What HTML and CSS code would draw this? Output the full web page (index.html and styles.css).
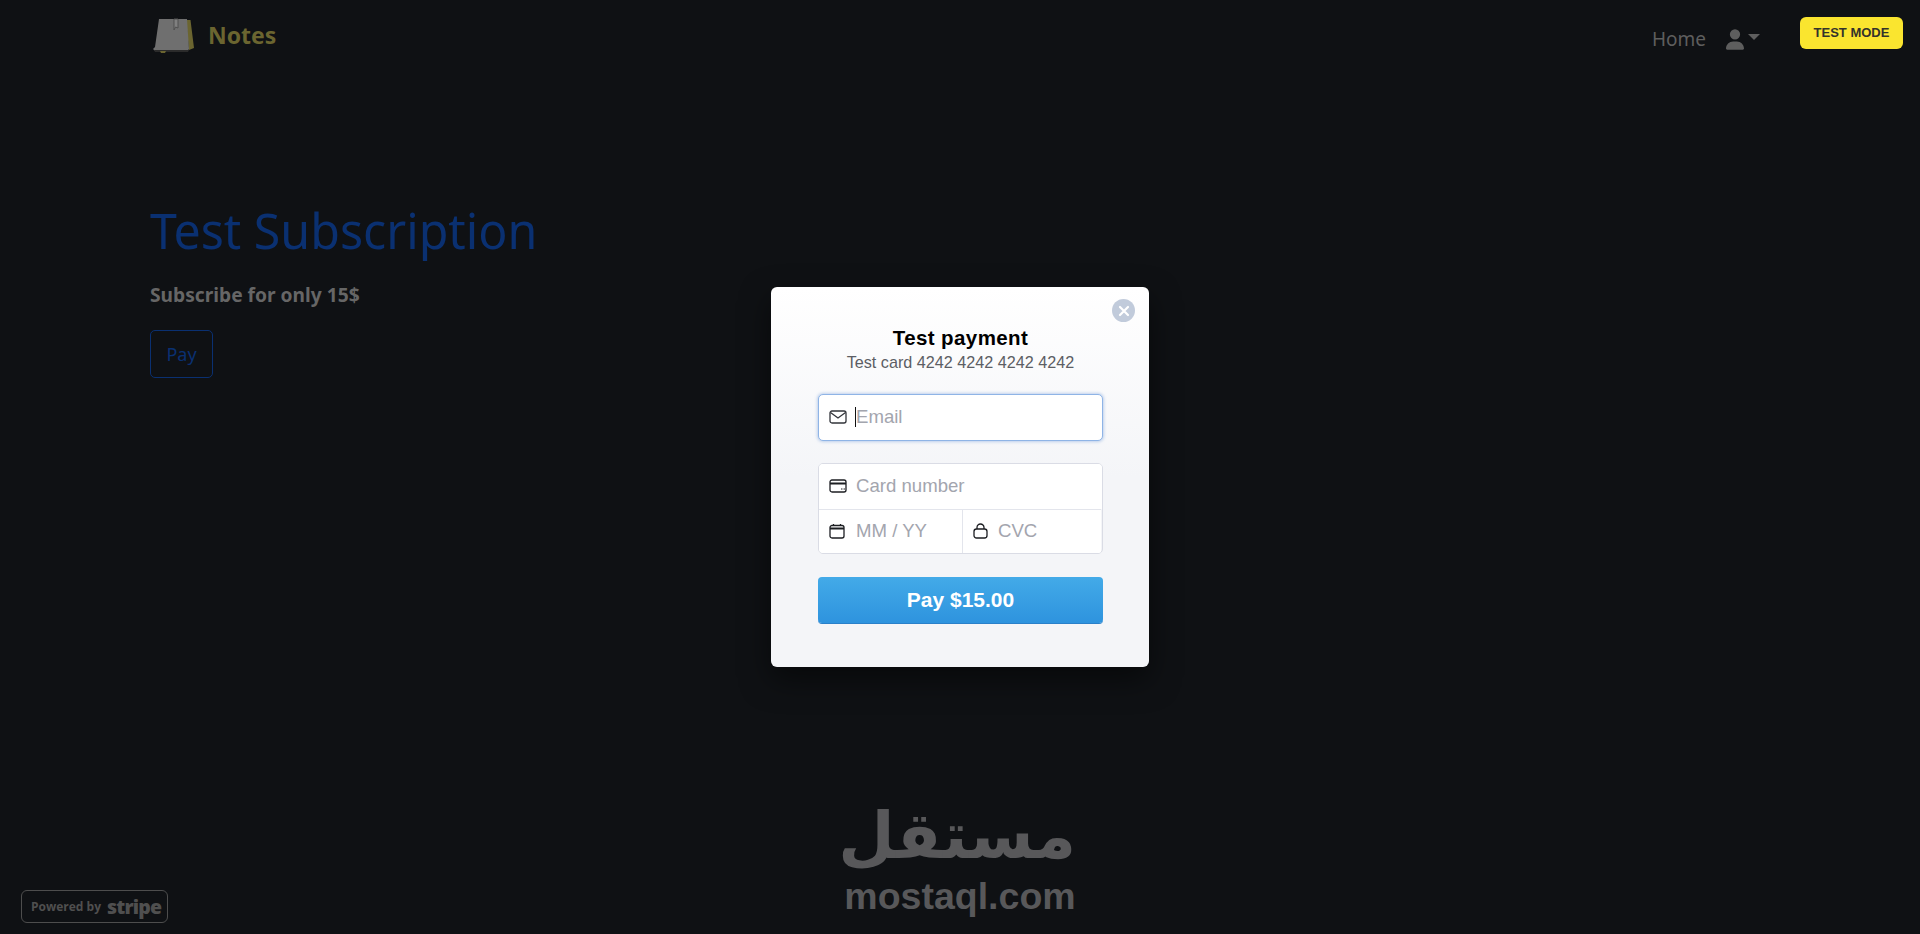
FILE: index.html
```html
<!DOCTYPE html>
<html lang="en">
<head>
    <meta charset="UTF-8">
    <meta name="viewport" content="width=device-width, initial-scale=1.0">
    <title>Test Subscription</title>
    <link rel="stylesheet" href="styles.css">
</head>
<body>
    <!-- Dimmed page behind the checkout -->
    <nav class="navbar">
        <a class="brand" href="#">
            <svg class="brand-icon" width="42" height="35" viewBox="0 0 42 35">
                <path d="M33 2h4.500l3.500 28-5 2z" fill="#6b6530"/>
                <path d="M6 1h28l2 30-1.500 2H2l-2-2 2-2z" fill="#6f6f6f"/>
                <path d="M21 1v11l1.500-3 2.500 1V1z" fill="#808080" stroke="#505050"/>
                <path d="M1 32h35l-1 2H2z" fill="#2b2b2b"/>
                <path d="M7 33h6l-1 2H8z" fill="#6b6530"/>
            </svg>
            <span>Notes</span>
        </a>
        <div class="nav-links">
            <a class="nav-link" href="#">Home</a>
            <a class="nav-user" href="#">
                <svg width="18" height="21" viewBox="0 0 448 512"><path fill="#5e5e5e" d="M224 256a128 128 0 1 0 0-256 128 128 0 1 0 0 256zm-45 48C79 304 0 383 0 482c0 17 13 30 30 30h388c17 0 30-13 30-30 0-99-79-178-178-178z"/></svg>
                <span class="caret"></span>
            </a>
        </div>
    </nav>

    <main class="content">
        <h1 class="title">Test Subscription</h1>
        <p class="lead">Subscribe for only 15$</p>
        <button class="btn-outline">Pay</button>
    </main>

    <div class="test-badge">TEST MODE</div>

    <!-- Checkout modal -->
    <div class="overlay">
        <div class="modal">
            <button class="close" aria-label="Close">
                <svg width="12" height="12" viewBox="0 0 12 12"><path d="M2 2l8 8M10 2l-8 8" stroke="#fff" stroke-width="2.2" stroke-linecap="round"/></svg>
            </button>
            <h2 class="modal-title">Test payment</h2>
            <p class="modal-sub">Test card 4242 4242 4242 4242</p>

            <div class="field field-email">
                <svg class="ico" width="18" height="14" viewBox="0 0 18 14"><rect x="1" y="1" width="16" height="12" rx="2" fill="none" stroke="#32343a" stroke-width="1.3"/><path d="M1.500 2.500L9 8l7.500-5.500" fill="none" stroke="#32343a" stroke-width="1.3"/></svg>
                <span class="cursor"></span>
                <span class="placeholder">Email</span>
            </div>

            <div class="card-group">
                <div class="field-row">
                    <svg class="ico" width="18" height="14" viewBox="0 0 18 14"><rect x="1" y="1" width="16" height="12" rx="2" fill="none" stroke="#1c1e22" stroke-width="1.3"/><path d="M1 4.500h16" stroke="#1c1e22" stroke-width="2"/><path d="M12 10h1.500M14.500 10H16" stroke="#1c1e22"/></svg>
                    <span class="placeholder">Card number</span>
                </div>
                <div class="field-split">
                    <div class="field-row">
                        <svg class="ico ico-cal" width="16" height="16" viewBox="0 0 16 16"><rect x="1" y="2.500" width="14" height="12.500" rx="2" fill="none" stroke="#1c1e22" stroke-width="1.3"/><path d="M1 5.500h14" stroke="#1c1e22" stroke-width="2"/><path d="M4.500 1v2M11.500 1v2" stroke="#1c1e22" stroke-width="1.3"/></svg>
                        <span class="placeholder">MM / YY</span>
                    </div>
                    <div class="field-row field-cvc">
                        <svg class="ico ico-lock" width="15" height="16" viewBox="0 0 15 16"><rect x="1" y="6" width="13" height="9" rx="2.500" fill="none" stroke="#1c1e22" stroke-width="1.3"/><path d="M4 6V4.500a3.500 3.500 0 0 1 7 0V6" fill="none" stroke="#1c1e22" stroke-width="1.3"/></svg>
                        <span class="placeholder">CVC</span>
                    </div>
                </div>
            </div>

            <button class="pay-btn">Pay $15.00</button>
        </div>
    </div>

    <a class="powered" href="#"><span class="powered-by">Powered by</span><span class="powered-stripe">stripe</span></a>

    <div class="watermark">
        <div class="watermark-ar" lang="ar" dir="rtl">مستقل</div>
        <div class="watermark-en">mostaql.com</div>
    </div>
</body>
</html>
```
FILE: styles.css
```css
* {
    box-sizing: border-box;
}

html, body {
    height: 100%;
}

body {
    margin: 0;
    background-color: #0f1114;
    font-family: "Noto Sans", "Open Sans", sans-serif;
    overflow: hidden;
}

a {
    text-decoration: none;
}

.navbar {
    display: flex;
    justify-content: space-between;
    align-items: center;
    height: 70px;
    padding: 0 160px 0 153px;
}

.brand {
    display: flex;
    align-items: center;
    gap: 13px;
    color: #6b6530;
    font-size: 23px;
    font-weight: 700;
}

.nav-links {
    display: flex;
    align-items: center;
    gap: 20px;
    margin-top: 8px;
}

.nav-link {
    color: #5e5e5e;
    font-size: 19px;
}

.nav-user {
    display: flex;
    align-items: center;
    gap: 4px;
}

.caret {
    width: 0;
    height: 0;
    margin-bottom: 5px;
    border-top: 6px solid #5e5e5e;
    border-left: 6px solid transparent;
    border-right: 6px solid transparent;
}

.content {
    padding: 132px 0 0 150px;
}

.title {
    margin: 0;
    color: #0a3071;
    font-size: 48.300px;
    font-weight: 400;
    line-height: 1.2;
}

.lead {
    margin: 21px 0 0;
    color: #666;
    font-size: 19.200px;
    font-weight: 700;
}

.btn-outline {
    margin-top: 22px;
    padding: 0 15px;
    height: 48px;
    width: 63px;
    background: none;
    border: 1px solid #0a3071;
    border-radius: 5px;
    color: #0a3071;
    font-family: inherit;
    font-size: 18px;
}

.test-badge {
    position: absolute;
    top: 17px;
    right: 17px;
    width: 103px;
    height: 32px;
    background-color: #fae52f;
    border-radius: 6px;
    color: #33332b;
    font-family: "Liberation Sans", Arial, sans-serif;
    font-size: 13px;
    font-weight: 700;
    line-height: 32px;
    text-align: center;
}

.overlay {
    position: absolute;
    inset: 0;
    display: flex;
    justify-content: center;
    align-items: flex-start;
    padding-top: 287px;
}

.modal {
    position: relative;
    width: 378px;
    height: 380px;
    padding: 40px 46px 0 47px;
    background: linear-gradient(#ffffff, #f4f5f8 50%);
    border-radius: 6px;
    box-shadow: 0 12px 30px rgba(0, 0, 0, 0.5);
    font-family: "Liberation Sans", Arial, sans-serif;
}

.close {
    position: absolute;
    top: 12px;
    right: 14px;
    display: flex;
    align-items: center;
    justify-content: center;
    width: 23px;
    height: 23px;
    padding: 0;
    background-color: #c1cbdb;
    border: none;
    border-radius: 50%;
}

.modal-title {
    margin: 0;
    color: #000;
    font-size: 20.500px;
    font-weight: 700;
    line-height: 22px;
    letter-spacing: 0.4px;
    text-align: center;
}

.modal-sub {
    margin: 3px 0 0;
    color: #5c5e64;
    font-size: 16.200px;
    line-height: 20px;
    text-align: center;
}

.field,
.field-row {
    display: flex;
    align-items: center;
    height: 45px;
    background-color: #fff;
    font-size: 18.600px;
}

.field-row {
    padding-bottom: 2px;
}

.ico {
    flex: none;
    margin-left: 10px;
}

.placeholder {
    color: #a3a5ae;
    margin-left: 9px;
}

.field-email {
    height: 47px;
    margin-top: 22px;
    padding-bottom: 1px;
    border: 1px solid #8fb4e6;
    border-radius: 5px;
    box-shadow: 0 0 3px 1px rgba(120, 160, 220, 0.45);
}

.cursor {
    width: 1px;
    height: 20px;
    margin-left: 8px;
    background-color: #111;
}

.field-email .placeholder {
    margin-left: 0;
}

.card-group {
    margin-top: 22px;
    border: 1px solid #dadce5;
    border-radius: 5px;
    overflow: hidden;
}

.field-split {
    display: grid;
    grid-template-columns: 143px 1fr;
    border-top: 1px solid #e3e5ec;
    margin-right: 1px;
}

.field-split .field-row {
    height: 43px;
}

.ico-cal {
    margin-right: 2px;
}

.field-cvc {
    border-left: 1px solid #e3e5ec;
}

.ico-lock {
    margin-left: 10px;
    margin-right: 1px;
}

.pay-btn {
    display: block;
    width: 285px;
    height: 46px;
    margin-top: 23px;
    background: linear-gradient(#43aae8, #2e93de);
    border: none;
    border-radius: 4px;
    box-shadow: 0 1px 0 #2a80c9;
    color: #fff;
    font-family: inherit;
    font-size: 21px;
    font-weight: 700;
}

.powered {
    position: absolute;
    left: 21px;
    bottom: 11px;
    display: flex;
    align-items: center;
    gap: 6px;
    width: 147px;
    height: 33px;
    padding-left: 9px;
    border: 1px solid #4d4d4d;
    border-radius: 6px;
    color: #4f4f4f;
    font-family: "Open Sans", sans-serif;
}

.powered-by {
    font-size: 12px;
    font-weight: 700;
}

.powered-stripe {
    font-size: 19.500px;
    font-weight: 800;
    letter-spacing: -0.8px;
}

.watermark {
    position: absolute;
    left: 844px;
    top: 790px;
    width: 232px;
    color: #58585a;
    text-align: center;
}

.watermark-ar {
    font-family: "DejaVu Sans", sans-serif;
    font-size: 65px;
    font-weight: 700;
    line-height: 92px;
}

.watermark-en {
    margin-top: -6px;
    font-family: "Liberation Sans", Arial, sans-serif;
    font-size: 37.500px;
    font-weight: 700;
    line-height: 40px;
}
```
